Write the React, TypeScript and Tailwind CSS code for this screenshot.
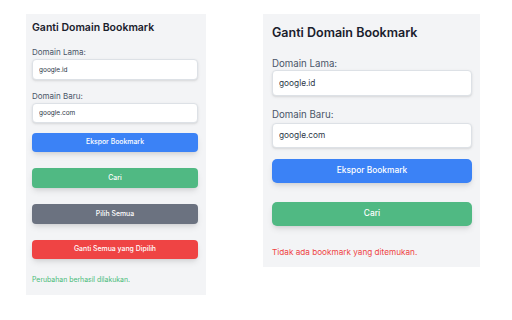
import React from "react";

const font = { fontFamily: "Inter, 'Noto Sans', sans-serif" };

const SmallPanel = () => (
  <div className="w-[180px] bg-[#f3f4f6] pl-[6px] pr-[8px] pt-[6px] h-[281px]">
    <h2 className="text-[10.5px] leading-[16px] font-semibold text-[#1a202c]">Ganti Domain Bookmark</h2>
    <label className="block mt-[9.5px] text-[8px] leading-[12px] text-[#4a5568]">Domain Lama:</label>
    <input
      readOnly
      value="google.id"
      className="mt-[1.5px] block w-full h-[21px] rounded-[4px] border border-[#dde1e6] bg-white px-[6px] text-[6.5px] text-[#2d3748] shadow-sm outline-none"
    />
    <label className="block mt-[9.5px] text-[8px] leading-[12px] text-[#4a5568]">Domain Baru:</label>
    <input
      readOnly
      value="google.com"
      className="mt-[1.5px] block w-full h-[20px] rounded-[4px] border border-[#dde1e6] bg-white px-[6px] text-[6.5px] text-[#2d3748] shadow-sm outline-none"
    />
    <button className="mt-[10px] block w-full h-[19px] rounded-[4px] bg-[#3b82f6] text-[6.9px] font-medium text-white shadow-md">
      Ekspor Bookmark
    </button>
    <button className="mt-[16px] block w-full h-[20px] rounded-[4px] bg-[#50b983] text-[6.9px] font-medium text-white shadow-md">
      Cari
    </button>
    <button className="mt-[16px] block w-full h-[20px] rounded-[4px] bg-[#6b7280] text-[6.9px] font-medium text-white shadow-md">
      Pilih Semua
    </button>
    <button className="mt-[16px] block w-full h-[19px] rounded-[4px] bg-[#ef4444] text-[6.9px] font-medium text-white shadow-md">
      Ganti Semua yang Dipilih
    </button>
    <p className="mt-[16px] text-[6.9px] leading-[10px] text-[#48bb78]">Perubahan berhasil dilakukan.</p>
  </div>
);

const LargePanel = () => (
  <div className="w-[217px] bg-[#f3f4f6] pl-[9px] pr-[8px] pt-[8.5px] h-[253px]">
    <h2 className="text-[12.5px] leading-[20px] font-semibold text-[#1a202c]">Ganti Domain Bookmark</h2>
    <label className="block mt-[15px] text-[9.7px] leading-[12px] text-[#4a5568]">Domain Lama:</label>
    <input
      readOnly
      value="google.id"
      className="block w-full h-[26px] rounded-[4px] border border-[#dde1e6] bg-white px-[6px] text-[8.3px] text-[#2d3748] shadow-sm outline-none"
    />
    <label className="block mt-[13px] text-[9.7px] leading-[12px] text-[#4a5568]">Domain Baru:</label>
    <input
      readOnly
      value="google.com"
      className="mt-[2px] block w-full h-[25px] rounded-[4px] border border-[#dde1e6] bg-white px-[6px] text-[8.3px] text-[#2d3748] shadow-sm outline-none"
    />
    <button className="mt-[11px] block w-full h-[24px] rounded-[5px] bg-[#3b82f6] text-[8.4px] font-medium text-white shadow-md">
      Ekspor Bookmark
    </button>
    <button className="mt-[19px] block w-full h-[24px] rounded-[5px] bg-[#50b983] text-[8.4px] font-medium text-white shadow-md">
      Cari
    </button>
    <p className="mt-[20px] text-[8.2px] leading-[12px] text-[#ef4444]">Tidak ada bookmark yang ditemukan.</p>
  </div>
);

export default function App() {
  return (
    <div style={font} className="w-[512px] h-[320px] bg-white flex items-start pl-[26px] pt-[14px] gap-[57px]">
      <SmallPanel />
      <LargePanel />
    </div>
  );
}
